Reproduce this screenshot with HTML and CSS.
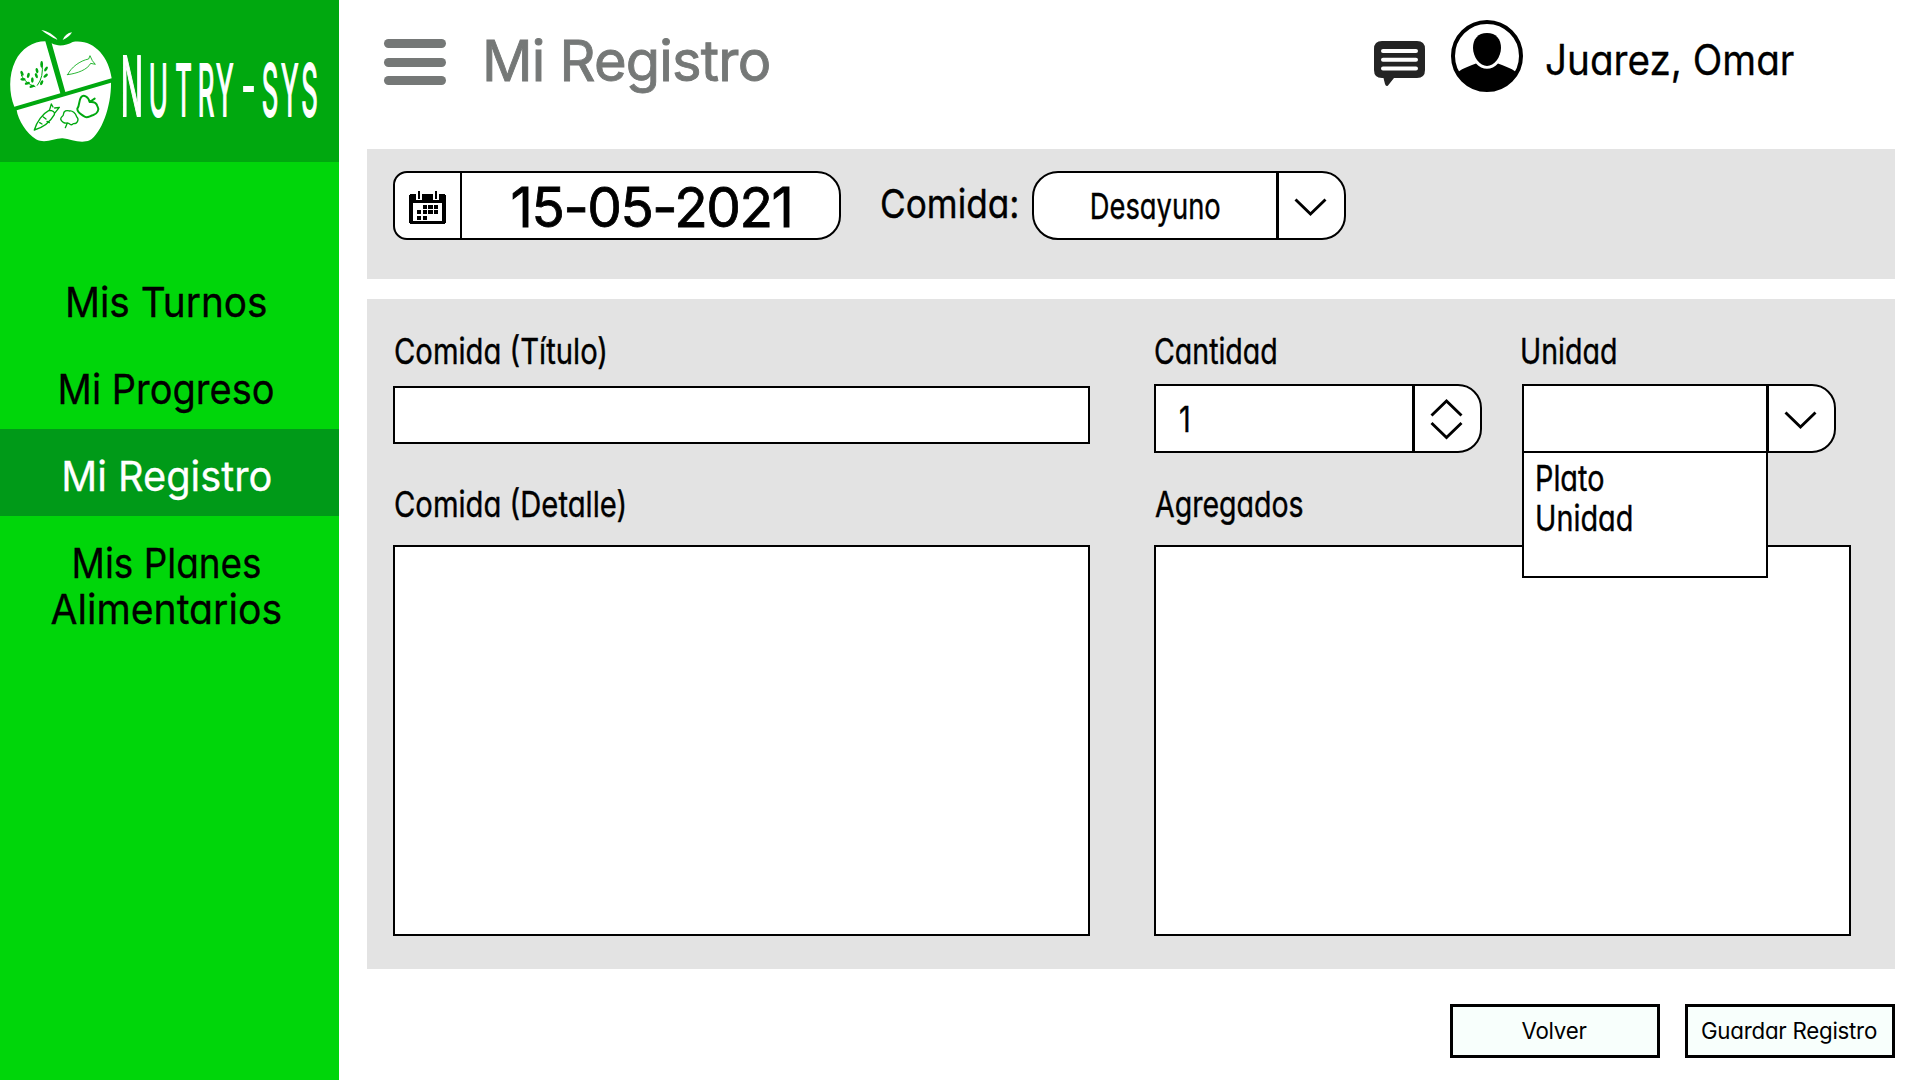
FILE: index.html
```html
<!DOCTYPE html>
<html lang="es">
<head>
<meta charset="utf-8">
<title>Nutry-sys - Mi Registro</title>
<link rel="stylesheet" href="styles.css">
</head>
<body>
<div class="app">
  <aside class="sidebar">
    <svg class="logo" viewBox="0 0 339 162" role="img" aria-label="Nutry-sys">
      <g transform="translate(0 22) scale(.33333)">
        <g fill="#fff">
          <path d="M124 24C143 27 160 38 173 53C156 47 140 36 124 24Z"/>
          <path d="M188 54C193 41 203 33 216 31C210 42 200 48 188 54Z"/>
          <path d="M136 58L181 214L43 254C27 214 25 160 46 117C64 80 99 58 136 58Z"/>
          <path d="M155 64C176 75 199 70 218 60C278 50 326 101 335 169L196 210Z"/>
          <path d="M50 265L333 182C334 254 304 334 269 355C242 366 213 352 188 349C162 348 137 367 108 352C80 336 54 294 50 265Z"/>
        </g>
        <g fill="none" stroke="#00a80f" stroke-width="3" stroke-linecap="round" stroke-linejoin="round">
          <path d="M64 160Q76 184 105 194M112 190Q132 165 126 124"/>
          <path stroke-width="2.5" d="M203 158C213 136 240 116 266 111L270 101L277 116L286 127L272 124C262 143 233 154 203 158Z"/>
          <path stroke-width="4" d="M103 324C110 299 128 275 147 265C158 265 166 270 163 278C151 299 128 317 103 324ZM148 266L154 246L159 255M163 275L178 256L164 258M130 285L138 291M141 298L148 302M119 302L126 306"/>
          <path stroke-width="4" d="M196 317L202 303C194 305 184 300 182 291C183 283 192 281 190 278C191 266 200 264 208 267C217 264 227 275 230 284C238 291 233 306 220 305C212 315 208 300 202 304"/>
          <path stroke-width="6" d="M269 240C265 222 250 217 243 226C235 239 240 249 232 260C231 273 244 276 252 283C261 291 268 282 280 279C292 275 299 263 292 252C289 240 277 239 269 240L284 230"/>
        </g>
        <g fill="#00a80f">
          <ellipse cx="66" cy="154" rx="4" ry="8" transform="rotate(-25 66 154)"/>
          <ellipse cx="85" cy="160" rx="4" ry="8" transform="rotate(15 85 160)"/>
          <ellipse cx="69" cy="172" rx="8" ry="4"/>
          <ellipse cx="82" cy="184" rx="8" ry="4" transform="rotate(-15 82 184)"/>
          <ellipse cx="97" cy="174" rx="4" ry="8"/>
          <ellipse cx="96" cy="193" rx="8" ry="4" transform="rotate(-20 96 193)"/>
          <ellipse cx="125" cy="127" rx="4" ry="10"/>
          <ellipse cx="111" cy="146" rx="4" ry="8" transform="rotate(-15 111 146)"/>
          <ellipse cx="138" cy="141" rx="4" ry="8" transform="rotate(35 138 141)"/>
          <ellipse cx="109" cy="161" rx="4" ry="8" transform="rotate(-20 109 161)"/>
          <ellipse cx="137" cy="161" rx="4" ry="8" transform="rotate(50 137 161)"/>
          <ellipse cx="125" cy="182" rx="4" ry="8" transform="rotate(25 125 182)"/>
        </g>
      </g>
      <text class="brand" transform="translate(0 116) scale(.36 1)" x="366 440 510 572 624 690 750 805 860" y="0 0 0 0 0 3 0 0 0"><tspan class="brand-cap">N</tspan>UTRY<tspan class="brand-dash">-</tspan>SYS</text>
    </svg>
    <nav class="menu">
      <a class="menu-item"><span class="turnos">Mis Turnos</span></a>
      <a class="menu-item"><span class="progreso">Mi Progreso</span></a>
      <a class="menu-item active"><span class="registro">Mi Registro</span></a>
      <a class="menu-item"><span class="planes">Mis Planes</span><span class="alimentarios">Alimentarios</span></a>
    </nav>
  </aside>

  <main class="main">
    <header class="header">
      <div class="burger"><i></i><i></i><i></i></div>
      <h1 class="title">Mi Registro</h1>
      <svg class="chat" viewBox="0 0 51 46">
        <path fill="#242424" d="M8 0H43Q51 0 51 8V29Q51 37 43 37H20L14 44.5Q12 46 11 43L9.500 37H8Q0 37 0 29V8Q0 0 8 0Z"/>
        <path stroke="#fff" stroke-width="4" stroke-linecap="round" d="M9 10H42M9 18.700H42M9 27.500H42"/>
      </svg>
      <svg class="avatar" viewBox="0 0 72 72">
        <circle cx="36" cy="36" r="34" fill="#fff" stroke="#000" stroke-width="4"/>
        <path d="M36 13C45 13 50 19 50 28C50 37 43 46 36 46S22 37 22 28C22 19 27 13 36 13Z"/>
        <path d="M7 52C12 48 19 46 25 43.500C31 50.500 41 50.500 47 43.500C53 46 60 48 65 52A33 33 0 0 1 7 52Z"/>
      </svg>
      <span class="user">Juarez, Omar</span>
    </header>

    <section class="filters">
      <div class="date-field">
        <div class="date-icon">
          <svg width="37" height="33" viewBox="0 0 37 33" shape-rendering="crispEdges">
            <rect x="0" y="3" width="37" height="30" rx="3"/>
            <path fill="#fff" d="M4 12H33V30H4Z"/>
            <path fill="#fff" d="M7 0H13V9H7ZM24 0H30V9H24Z"/>
            <path d="M9 0H11V8H9ZM26 0H28V8H26ZM14 14h4v4h-4zM19 14h5v4h-5zM25 14h4v4h-4zM8 19h4v4h-4zM14 19h4v4h-4zM19 19h5v4h-5zM25 19h4v4h-4zM8 25h4v4h-4zM14 25h4v4h-4z"/>
          </svg>
        </div>
        <div class="date-value">15-05-2021</div>
      </div>
      <span class="meal-label">Comida:</span>
      <div class="select meal">
        <div class="select-value"><span class="narrow-meal">Desayuno</span></div>
        <div class="select-arrow"><svg width="33" height="19" viewBox="0 0 33 19"><path class="chev" d="M1.500 1.500L16.500 16L31.500 1.500"/></svg></div>
      </div>
    </section>

    <section class="form">
      <div class="column">
        <label class="label"><span>Comida (Título)</span></label>
        <div class="row"><div class="input"></div></div>
        <label class="label second"><span>Comida (Detalle)</span></label>
        <div class="textarea"></div>
      </div>
      <div class="column">
        <div class="pair">
          <div class="quantity">
            <label class="label short"><span>Cantidad</span></label>
            <div class="select row">
              <div class="select-value number"><span>1</span></div>
              <div class="select-arrow"><svg width="33" height="42" viewBox="0 0 33 42"><path class="chev" d="M1.500 17.500L16.500 3L31.500 17.500M1.500 25L16.500 39.500L31.500 25"/></svg></div>
            </div>
          </div>
          <div class="unit">
            <label class="label short"><span>Unidad</span></label>
            <div class="select row">
              <div class="select-value"></div>
              <div class="select-arrow"><svg width="33" height="19" viewBox="0 0 33 19"><path class="chev" d="M1.500 1.500L16.500 16L31.500 1.500"/></svg></div>
              <div class="options"><span>Plato</span><span>Unidad</span></div>
            </div>
          </div>
        </div>
        <label class="label short second"><span>Agregados</span></label>
        <div class="textarea"></div>
      </div>
    </section>

    <footer class="actions">
      <button class="button">Volver</button>
      <button class="button">Guardar Registro</button>
    </footer>
  </main>
</div>
</body>
</html>
```
FILE: styles.css
```css
* { box-sizing: border-box; }

body {
  margin: 0;
  background: #fff;
  color: #000;
  font-family: Inter, "Open Sans", sans-serif;
  font-feature-settings: "cv11";
}

.app { display: flex; width: 1920px; height: 1080px; overflow: hidden; }

/* Sidebar */
.sidebar { width: 339px; background: #00d60a; }
.logo { display: block; width: 339px; height: 162px; background: #00a80f; }
.brand {
  font-size: 71.5px;
  font-weight: 400;
  text-anchor: middle;
  fill: #fff;
  stroke: #fff;
  stroke-width: 2px;
}
.brand-cap { font-size: 82px; }
.brand-dash { font-size: 98px; font-weight: 300; stroke: none; }

.menu { padding-top: 93px; }
.menu-item {
  display: flex;
  flex-direction: column;
  align-items: center;
  min-height: 87px;
  padding: 24px 6px 0 0;
  font-size: 41px;
  line-height: 46px;
  -webkit-text-stroke: .3px;
}
.menu-item.active { background: #009a18; color: #fff; }
.turnos { transform: scaleX(.945); }
.progreso { transform: scaleX(.927); }
.registro { transform: scaleX(.97); }
.planes { transform: scaleX(.9); }
.alimentarios { transform: scaleX(.955); }

/* Header */
.main { flex: 1; padding: 0 25px 0 28px; }
.header { display: flex; align-items: center; height: 118px; padding-left: 17px; }
.burger { display: flex; flex-direction: column; gap: 9.5px; width: 62px; margin: 6px 36px 0 0; }
.burger i { height: 9px; border-radius: 5px; background: #757877; }
.title {
  width: 892px;
  margin: 3px 0 0;
  font-size: 56px;
  font-weight: 400;
  letter-spacing: -.8px;
  color: #757877;
  -webkit-text-stroke: .9px;
}
.chat { width: 51px; height: 46px; margin: 9px 26px 0 0; }
.avatar { width: 72px; height: 72px; margin: 0 22px 6px 0; }
.user {
  font-size: 42px;
  white-space: nowrap;
  transform: scaleX(.92);
  transform-origin: left;
  -webkit-text-stroke: .3px;
}

/* Date and meal */
.filters {
  display: flex;
  align-items: flex-start;
  height: 130px;
  margin: 31px 0 20px;
  padding: 22px 0 0 26px;
  background: #e3e3e3;
}
.date-field {
  display: flex;
  width: 448px;
  height: 69px;
  border: 2px solid #000;
  border-radius: 14px 24px 24px 14px;
  background: #fff;
}
.date-icon {
  display: flex;
  align-items: center;
  justify-content: center;
  width: 67px;
  padding-top: 4px;
  border-right: 2px solid #000;
}
.date-value {
  flex: 1;
  padding-left: 2px;
  text-align: center;
  font-size: 55px;
  line-height: 69px;
  letter-spacing: -1.5px;
  -webkit-text-stroke: .8px;
}
.meal-label {
  width: 152px;
  margin-left: 39px;
  font-size: 40px;
  line-height: 65px;
  white-space: nowrap;
  transform: scaleX(.88);
  transform-origin: left;
  -webkit-text-stroke: .4px;
}

.select {
  position: relative;
  display: flex;
  height: 69px;
  border: 2px solid #000;
  border-radius: 0 24px 24px 0;
  background: #fff;
}
.select-value { flex: 1; display: flex; align-items: center; font-size: 36px; -webkit-text-stroke: .4px; }
.select-arrow {
  display: flex;
  align-items: center;
  justify-content: center;
  width: 68px;
  padding: 3px 3px 0 0;
  border-left: 3px solid #000;
}
.quantity .select-arrow { padding-top: 0; }
.chev { fill: none; stroke: #000; stroke-width: 2.9; }
.meal { width: 314px; border-radius: 26px 24px 24px 26px; }
.meal .select-value { justify-content: center; }
.narrow-meal { transform: scaleX(.76); }

/* Form */
.form {
  display: grid;
  grid-template-columns: 697px 697px;
  gap: 64px;
  height: 670px;
  padding: 28px 0 0 26px;
  background: #e3e3e3;
}
.label {
  display: block;
  height: 44px;
  margin-bottom: 13px;
  padding: 2px 0 0 1px;
  font-size: 36px;
  line-height: 44px;
  white-space: nowrap;
  -webkit-text-stroke: .4px;
}
.label span { display: inline-block; transform: scaleX(.812); transform-origin: left; }
.label.short { padding-left: 0; }
.label.short span { transform: scaleX(.792); }
.row { height: 69px; }
.input { height: 58px; border: 2px solid #000; background: #fff; transform: translateY(2px); }
.second { margin: 27px 0 21px; }
.label.short.second { padding-left: 1px; }
.textarea { height: 391px; border: 2px solid #000; background: #fff; }
.pair { display: flex; gap: 40px; }
.quantity { width: 328px; }
.unit { width: 314px; }
.unit .label { margin-left: -2px; }
.number { padding-left: 23px; }
.number span { transform: scaleX(.8); transform-origin: left; }
.options {
  position: absolute;
  top: 65px;
  left: -2px;
  display: flex;
  flex-direction: column;
  width: 246px;
  height: 127px;
  padding: 5px 0 0 11px;
  border: 2px solid #000;
  background: #fff;
  font-size: 36px;
  line-height: 40px;
  -webkit-text-stroke: .4px;
}
.options span { transform: scaleX(.8); transform-origin: left; }

/* Actions */
.actions { display: flex; justify-content: flex-end; gap: 25px; padding-top: 35px; }
.button {
  width: 210px;
  height: 54px;
  padding: 0 2px 0 0;
  border: 3px solid #000;
  background: #f8fffc;
  color: #000;
  font: 22.3px/48px Inter, "Open Sans", sans-serif;
  font-feature-settings: "cv11";
  letter-spacing: -.25px;
  white-space: nowrap;
}
```
